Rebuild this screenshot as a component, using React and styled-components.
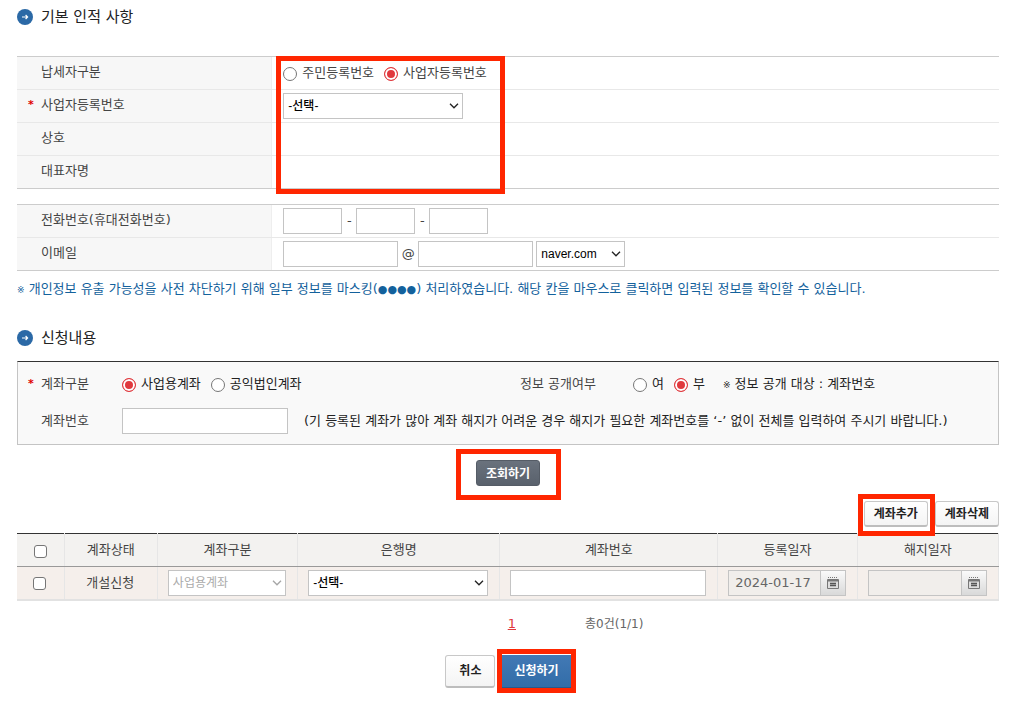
import React from "react";
import styled, { createGlobalStyle, css } from "styled-components";

const GlobalStyle = createGlobalStyle`
  * {
    box-sizing: border-box;
  }
  body {
    margin: 0;
    background: #fff;
    color: #444;
    font-family: "DejaVu Sans", "Noto Sans CJK KR", sans-serif;
    font-size: 13px;
    line-height: 18px;
  }
`;

const controlFont = css`
  font-family: "Liberation Sans", "Noto Sans CJK KR", sans-serif;
  font-size: 12px;
`;

const Page = styled.main`
  padding: 5px 25px 8px 17px;
`;

const Heading = styled.h2`
  display: flex;
  align-items: center;
  gap: 8px;
  height: 24px;
  margin: 0;
  color: #222;
  font-size: 15px;
  font-weight: 400;
`;

const FormTable = styled.div`
  position: relative;
  margin-top: ${(p) => p.$gap}px;
  border-top: 1px solid #ccc;
  border-bottom: 1px solid #ccc;
`;

const FormRow = styled.div`
  display: grid;
  grid-template-columns: 26% 1fr;
  height: 33px;

  &:first-child {
    height: 32px;
  }
  & + & {
    border-top: 1px solid #e8e8e8;
  }
`;

const FormLabel = styled.div`
  position: relative;
  padding: 6px 0 0 24px;
  background: #f7f7f7;
  border-right: 1px solid #eee;
`;

const FormValue = styled.div`
  display: flex;
  align-items: center;
  padding-left: 11px;
`;

const RequiredMark = styled.span`
  position: absolute;
  left: ${(p) => p.$left || 11}px;
  color: #e00000;
  font-size: 11px;
  font-weight: 700;
`;

const Marker = styled.span`
  position: absolute;
  inset: ${(p) => p.$inset};
  width: ${(p) => p.$width || "auto"};
  border: 5px solid #ff2600;
  pointer-events: none;
  z-index: 1;
`;

const Marked = styled.span`
  position: relative;
  display: inline-flex;
`;

const RadioLabel = styled.label`
  display: inline-flex;
  align-items: center;
  gap: 5px;
  margin-right: 10px;
`;

const Radio = styled.input.attrs({ type: "radio" })`
  appearance: none;
  width: 14px;
  height: 14px;
  margin: 2px 0 0;
  border: 1px solid #767676;
  border-radius: 50%;
  background: #fff;

  &:checked {
    border-color: #e0393e;
    background: #e0393e;
    box-shadow: inset 0 0 0 2px #fff;
  }
`;

const Checkbox = styled.input.attrs({ type: "checkbox" })`
  appearance: none;
  display: block;
  width: 13px;
  height: 13px;
  margin: 2px auto 0;
  border: 1px solid #767676;
  border-radius: 3px;
  background: #fff;
`;

const TextInput = styled.input`
  ${controlFont}
  width: ${(p) => p.$width || "100%"};
  height: 26px;
  padding: 0 5px;
  border: 1px solid #c4c4c4;
  border-radius: 0;
  background: #fff;
`;

const SelectWrap = styled.span`
  position: relative;
  display: block;
  width: ${(p) => p.$width || "100%"};

  svg {
    position: absolute;
    right: 4px;
    top: 10px;
    opacity: ${(p) => (p.$disabled ? 0.4 : 1)};
    pointer-events: none;
  }
`;

const SelectBox = styled.select`
  ${controlFont}
  appearance: none;
  display: block;
  width: 100%;
  height: 26px;
  padding: 0 16px 0 4px;
  border: 1px solid #c4c4c4;
  border-radius: 0;
  background: #fff;
  color: #000;
  font-weight: 500;

  &:disabled {
    color: #aaa;
    opacity: 1;
    font-weight: 400;
  }
`;

const Separator = styled.span`
  width: ${(p) => p.$width}px;
  text-align: center;
`;

const Notice = styled.p`
  margin: 9px 0 27px;
  color: #13619c;
`;

const Small = styled.span`
  font-size: ${(p) => p.$size}px;
`;

const SearchBox = styled.section`
  display: grid;
  grid-template-columns: 81px 398px 113px 1fr;
  grid-template-rows: 36px 38px;
  align-items: center;
  margin-top: 11px;
  padding: 4px 0 4px 23px;
  border: 1px solid #c4c4c4;
  border-top-color: #333;
  background: #f9f9f9;
`;

const SearchLabel = styled.div`
  position: relative;
`;

const SearchValue = styled.div`
  display: flex;
  align-items: center;
  color: #222;
  grid-column: ${(p) => (p.$wide ? "2 / -1" : "auto")};
`;

const Hint = styled.span`
  margin-left: ${(p) => p.$gap}px;
  white-space: nowrap;
`;

const ButtonRow = styled.div`
  display: flex;
  justify-content: ${(p) => p.$align || "center"};
  gap: 7px;
  margin-top: ${(p) => p.$gap}px;
`;

const Button = styled.button`
  ${controlFont}
  height: ${(p) => (p.$large ? 33 : 26)}px;
  padding: 0 ${(p) => (p.$large ? 13 : 9)}px 2px;
  border: 1px solid #c8c8c8;
  border-bottom: 2px solid #bdbdbd;
  border-radius: 3px;
  background: linear-gradient(#fff, #f4f4f4);
  color: #222;
  font-weight: 700;
  white-space: nowrap;
`;

const DarkButton = styled(Button)`
  border: 1px solid #555c66;
  background: linear-gradient(#6a727d, #59616c);
  color: #fff;
`;

const BlueButton = styled(Button)`
  padding: 0 12px 2px;
  border: 0;
  border-bottom: 1px solid #28598c;
  border-radius: 0;
  background: linear-gradient(#4279b5, #326da8);
  color: #fff;
`;

const AccountTable = styled.table`
  width: 100%;
  margin-top: 6px;
  border-collapse: collapse;
  table-layout: fixed;
  border-bottom: 2px solid #e2e2e2;
  text-align: center;

  th,
  td {
    height: 33px;
    border-right: 1px solid #e6e6e6;
  }
  th {
    padding: 0;
    background: #f3f2f0;
    border-top: 1px solid #333;
    border-bottom: 1px solid #999;
    font-weight: 400;
  }
  td {
    padding: 0 11px 0 10px;
    background: #f5efeb;
  }
`;

const DateField = styled.span`
  display: flex;

  input {
    flex: 1;
    min-width: 0;
    padding: 0 6px;
    border-right: 0;
    background: #f1eeeb;
    color: #666;
    font-family: "DejaVu Sans", sans-serif;
    font-size: 13px;
  }
`;

const CalendarButton = styled.button`
  display: flex;
  align-items: center;
  justify-content: center;
  width: 26px;
  height: 26px;
  padding: 0;
  border: 1px solid #c4c4c4;
  background: linear-gradient(#fafafa, #d9d9d9);
`;

const Pager = styled.nav`
  display: grid;
  grid-template-columns: 1fr 1fr;
  column-gap: 69px;
  align-items: center;
  margin-top: 14px;
  padding-left: 85px;
  color: #666;

  a {
    justify-self: end;
    color: #e0393e;
  }
  span {
    font-size: 12px;
  }
`;

const ArrowIcon = () => (
  <svg width="16" height="16" viewBox="0 0 16 16" aria-hidden="true">
    <circle cx="8" cy="8" r="8" fill="#2b69a6" />
    <path
      d="M5 8H10.5M8.6 6 10.6 8l-2 2"
      fill="none"
      stroke="#fff"
      strokeWidth="1.2"
    />
  </svg>
);

const ChevronIcon = () => (
  <svg width="10" height="6" viewBox="0 0 10 6" aria-hidden="true">
    <path d="M1 .8 5 4.8 9 .8" fill="none" stroke="#222" strokeWidth="1.3" />
  </svg>
);

const CalendarIcon = () => (
  <svg width="12" height="12" viewBox="0 0 12 12" aria-hidden="true">
    <path d="M1 .5h10" stroke="#777" strokeDasharray="1 1" />
    <path d="M.5 2.5h11v9H.5z" fill="#ddd" stroke="#777" />
    <path d="M1 3.5h10" stroke="#777" strokeWidth="2" />
    <path d="M3 6.5h6M3 8.5h6" stroke="#555" strokeWidth="1.4" />
  </svg>
);

const Select = ({ label, options, width, disabled }) => (
  <SelectWrap $width={width} $disabled={disabled}>
    <SelectBox aria-label={label} disabled={disabled}>
      {options.map((option) => (
        <option key={option}>{option}</option>
      ))}
    </SelectBox>
    <ChevronIcon />
  </SelectWrap>
);

const RadioOption = ({ name, checked, children }) => (
  <RadioLabel>
    <Radio name={name} defaultChecked={checked} />
    {children}
  </RadioLabel>
);

const DateInput = ({ label, value }) => (
  <DateField>
    <TextInput aria-label={label} defaultValue={value} readOnly />
    <CalendarButton type="button" aria-label={label}>
      <CalendarIcon />
    </CalendarButton>
  </DateField>
);

const columns = [
  { name: "계좌상태", width: "9.5%" },
  { name: "계좌구분", width: "14.3%" },
  { name: "은행명", width: "20.6%" },
  { name: "계좌번호", width: "22.2%" },
  { name: "등록일자", width: "14.2%" },
  { name: "해지일자", width: "14.4%" },
];

const App = () => {
  return (
    <Page>
      <GlobalStyle />
      <Heading>
        <ArrowIcon />
        기본 인적 사항
      </Heading>
      <FormTable $gap={27}>
        <FormRow>
          <FormLabel>납세자구분</FormLabel>
          <FormValue>
            <RadioOption name="taxpayer">주민등록번호</RadioOption>
            <RadioOption name="taxpayer" checked>
              사업자등록번호
            </RadioOption>
          </FormValue>
        </FormRow>
        <FormRow>
          <FormLabel>
            <RequiredMark>*</RequiredMark>
            사업자등록번호
          </FormLabel>
          <FormValue>
            <Select label="사업자등록번호" options={["-선택-"]} width="180px" />
          </FormValue>
        </FormRow>
        <FormRow>
          <FormLabel>상호</FormLabel>
          <FormValue />
        </FormRow>
        <FormRow>
          <FormLabel>대표자명</FormLabel>
          <FormValue />
        </FormRow>
        <Marker $inset="-1px auto -6px 259px" $width="229px" />
      </FormTable>

      <FormTable $gap={15}>
        <FormRow>
          <FormLabel>전화번호(휴대전화번호)</FormLabel>
          <FormValue>
            <TextInput aria-label="전화번호 1" $width="59px" />
            <Separator $width={14}>-</Separator>
            <TextInput aria-label="전화번호 2" $width="59px" />
            <Separator $width={14}>-</Separator>
            <TextInput aria-label="전화번호 3" $width="59px" />
          </FormValue>
        </FormRow>
        <FormRow>
          <FormLabel>이메일</FormLabel>
          <FormValue>
            <TextInput aria-label="이메일 아이디" $width="115px" />
            <Separator $width={20}>@</Separator>
            <TextInput aria-label="이메일 도메인" $width="115px" />
            <Separator $width={3} />
            <Select label="이메일 선택" options={["naver.com"]} width="89px" />
          </FormValue>
        </FormRow>
      </FormTable>
      <Notice>
        <Small $size={9}>※</Small> 개인정보 유출 가능성을 사전 차단하기 위해
        일부 정보를 마스킹(<Small $size={11}>●●●●</Small>) 처리하였습니다. 해당
        칸을 마우스로 클릭하면 입력된 정보를 확인할 수 있습니다.
      </Notice>

      <Heading>
        <ArrowIcon />
        신청내용
      </Heading>
      <SearchBox>
        <SearchLabel>
          <RequiredMark $left={-13}>*</RequiredMark>
          계좌구분
        </SearchLabel>
        <SearchValue>
          <RadioOption name="account" checked>
            사업용계좌
          </RadioOption>
          <RadioOption name="account">공익법인계좌</RadioOption>
        </SearchValue>
        <SearchLabel>정보 공개여부</SearchLabel>
        <SearchValue>
          <RadioOption name="open">여</RadioOption>
          <RadioOption name="open" checked>
            부
          </RadioOption>
          <Hint $gap={8}>
            <Small $size={9}>※</Small> 정보 공개 대상 : 계좌번호
          </Hint>
        </SearchValue>
        <SearchLabel as="label" htmlFor="account-number">
          계좌번호
        </SearchLabel>
        <SearchValue $wide>
          <TextInput id="account-number" $width="166px" />
          <Hint $gap={16}>
            (기 등록된 계좌가 많아 계좌 해지가 어려운 경우 해지가 필요한
            계좌번호를 ‘-’ 없이 전체를 입력하여 주시기 바랍니다.)
          </Hint>
        </SearchValue>
      </SearchBox>
      <ButtonRow $gap={15}>
        <Marked>
          <Marker $inset="-11px -21px -14px -20px" />
          <DarkButton type="button">조회하기</DarkButton>
        </Marked>
      </ButtonRow>

      <ButtonRow $gap={15} $align="flex-end">
        <Marked>
          <Marker $inset="-7px -7px -9px -6px" />
          <Button type="button">계좌추가</Button>
        </Marked>
        <Button type="button">계좌삭제</Button>
      </ButtonRow>
      <AccountTable>
        <colgroup>
          <col style={{ width: "4.8%" }} />
          {columns.map((column) => (
            <col key={column.name} style={{ width: column.width }} />
          ))}
        </colgroup>
        <thead>
          <tr>
            <th>
              <Checkbox aria-label="전체 선택" />
            </th>
            {columns.map((column) => (
              <th key={column.name}>{column.name}</th>
            ))}
          </tr>
        </thead>
        <tbody>
          <tr>
            <td>
              <Checkbox aria-label="행 선택" />
            </td>
            <td>개설신청</td>
            <td>
              <Select label="계좌구분" options={["사업용계좌"]} disabled />
            </td>
            <td>
              <Select label="은행명" options={["-선택-"]} />
            </td>
            <td>
              <TextInput aria-label="계좌번호" />
            </td>
            <td>
              <DateInput label="등록일자" value="2024-01-17" />
            </td>
            <td>
              <DateInput label="해지일자" />
            </td>
          </tr>
        </tbody>
      </AccountTable>
      <Pager>
        <a href="#1">1</a>
        <span>총0건(1/1)</span>
      </Pager>
      <ButtonRow $gap={22}>
        <Button type="button" $large>
          취소
        </Button>
        <Marked>
          <Marker $inset="-6px -5px -5px -5px" />
          <BlueButton type="button" $large>
            신청하기
          </BlueButton>
        </Marked>
      </ButtonRow>
    </Page>
  );
};

export default App;
